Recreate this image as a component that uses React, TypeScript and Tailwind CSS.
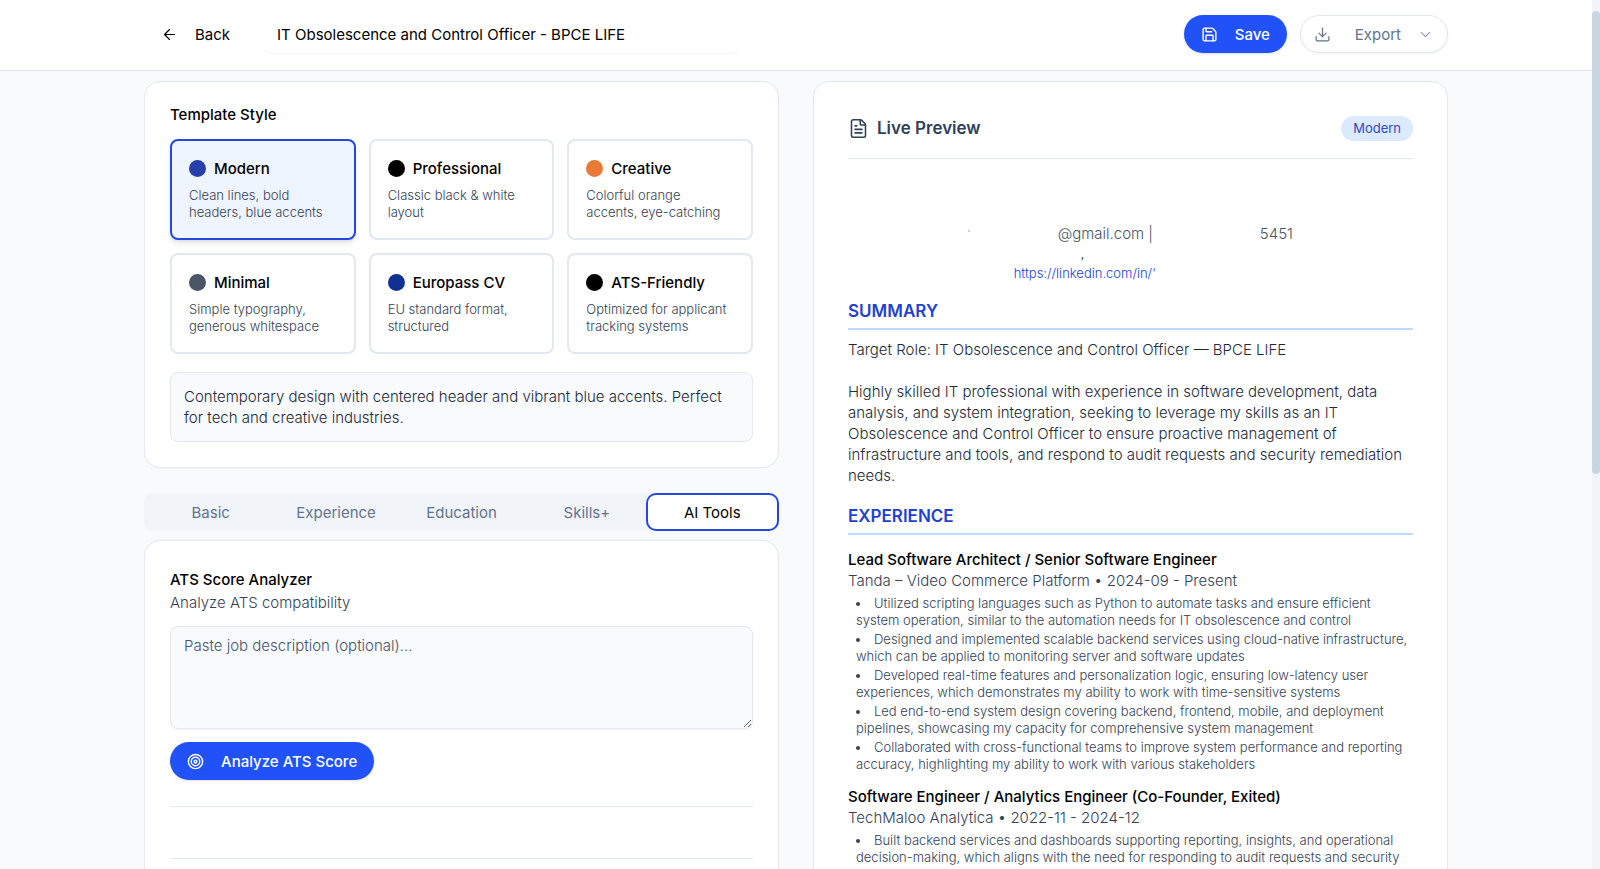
import React, { useState } from 'react';
import { ArrowLeft, ChevronDown, Download, FileText, Save, Target } from 'lucide-react';

interface Template {
  id: string;
  name: string;
  description: string;
  dot: string;
}

interface Job {
  title: string;
  company: string;
  bullets: string[];
}

const templates: Template[] = [
  { id: 'modern', name: 'Modern', description: 'Clean lines, bold headers, blue accents', dot: 'bg-[#2540ab]' },
  { id: 'professional', name: 'Professional', description: 'Classic black & white layout', dot: 'bg-black' },
  { id: 'creative', name: 'Creative', description: 'Colorful orange accents, eye-catching', dot: 'bg-[#e87a35]' },
  { id: 'minimal', name: 'Minimal', description: 'Simple typography, generous whitespace', dot: 'bg-gray-600' },
  { id: 'europass', name: 'Europass CV', description: 'EU standard format, structured', dot: 'bg-[#113192]' },
  { id: 'ats', name: 'ATS-Friendly', description: 'Optimized for applicant tracking systems', dot: 'bg-black' },
];

const tabs = ['Basic', 'Experience', 'Education', 'Skills+', 'AI Tools'];

const jobs: Job[] = [
  {
    title: 'Lead Software Architect / Senior Software Engineer',
    company: 'Tanda – Video Commerce Platform • 2024-09 - Present',
    bullets: [
      'Utilized scripting languages such as Python to automate tasks and ensure efficient system operation, similar to the automation needs for IT obsolescence and control',
      'Designed and implemented scalable backend services using cloud-native infrastructure, which can be applied to monitoring server and software updates',
      'Developed real-time features and personalization logic, ensuring low-latency user experiences, which demonstrates my ability to work with time-sensitive systems',
      'Led end-to-end system design covering backend, frontend, mobile, and deployment pipelines, showcasing my capacity for comprehensive system management',
      'Collaborated with cross-functional teams to improve system performance and reporting accuracy, highlighting my ability to work with various stakeholders',
    ],
  },
  {
    title: 'Software Engineer / Analytics Engineer (Co-Founder, Exited)',
    company: 'TechMaloo Analytica • 2022-11 - 2024-12',
    bullets: [
      'Built backend services and dashboards supporting reporting, insights, and operational decision-making, which aligns with the need for responding to audit requests and security',
    ],
  },
];

const Header: React.FC = () => (
  <header className="shrink-0 border-b border-slate-200 bg-white">
    <div className="mx-auto flex h-[70px] max-w-[1304px] items-center justify-between pb-[2px]">
      <div className="flex items-center">
        <button className="flex items-center gap-[17px] px-[17px]">
          <ArrowLeft className="h-[17px] w-[17px]" strokeWidth={1.75} />
          Back
        </button>
        <input
          aria-label="Resume title"
          defaultValue="IT Obsolescence and Control Officer - BPCE LIFE"
          className="ml-4 h-[38px] w-[478px] rounded-lg bg-white px-[14px] shadow-[0_1px_2px_rgba(0,0,0,0.04)] outline-none"
        />
      </div>
      <div className="flex items-center gap-[13px]">
        <button className="flex h-[38px] items-center gap-[17px] rounded-full bg-[#2152f8] px-[17px] font-medium text-white shadow-sm">
          <Save className="h-[17px] w-[17px]" />
          Save
        </button>
        <button className="flex h-[38px] items-center rounded-full border border-slate-200 bg-white px-[13px] text-slate-500 shadow-xs">
          <Download className="mr-[24px] h-[17px] w-[17px]" strokeWidth={1.75} />
          Export
          <ChevronDown className="ml-4 h-[17px] w-[17px] text-slate-400" strokeWidth={1.75} />
        </button>
      </div>
    </div>
  </header>
);

const TemplatePicker: React.FC = () => {
  const [selected, setSelected] = useState('modern');

  return (
    <section className="rounded-2xl border border-slate-200 bg-white p-[25px]">
      <h2 className="mb-[17px] leading-[15px] font-medium">Template Style</h2>
      <div className="grid grid-cols-3 gap-[13px]">
        {templates.map((t) => (
          <button
            key={t.id}
            onClick={() => setSelected(t.id)}
            className={`rounded-lg border-2 p-[17px] text-left ${
              selected === t.id ? 'border-[#2547e0] bg-[#eff5ff] shadow-md' : 'border-slate-200 bg-white'
            }`}
          >
            <div className="mb-2 flex items-center gap-2">
              <span className={`h-[17px] w-[17px] rounded-full ${t.dot}`} />
              <span className="font-medium">{t.name}</span>
            </div>
            <p className="text-[13px] leading-[17px] font-light text-gray-700">{t.description}</p>
          </button>
        ))}
      </div>
      <p className="mt-[18px] rounded-lg border border-slate-200 bg-slate-50 p-[13px] font-light text-gray-800">
        Contemporary design with centered header and vibrant blue accents. Perfect for tech and creative industries.
      </p>
    </section>
  );
};

const AiTools: React.FC = () => (
  <section className="mt-[9px] rounded-2xl border border-slate-200 bg-white p-[25px] pt-[27px]">
    <h2 className="leading-6 font-medium">ATS Score Analyzer</h2>
    <p className="font-light text-gray-700">Analyze ATS compatibility</p>
    <textarea
      aria-label="Job description"
      placeholder="Paste job description (optional)..."
      className="mt-[13px] block h-[103px] w-full rounded-lg border border-slate-200 bg-slate-50 px-[13px] py-2 font-light shadow-xs outline-none placeholder:text-slate-600"
    />
    <button className="mt-[13px] flex h-[38px] items-center gap-[17px] rounded-full bg-[#2152f8] px-[17px] font-medium text-white shadow-sm">
      <Target className="h-[17px] w-[17px]" />
      Analyze ATS Score
    </button>
    <hr className="mt-[26px] border-slate-200" />
    <hr className="mt-[51px] border-slate-200" />
    <div className="h-20" />
  </section>
);

const Editor: React.FC = () => {
  const [active, setActive] = useState('AI Tools');

  return (
    <div>
      <TemplatePicker />
      <div role="tablist" className="mt-[25px] grid h-[38px] grid-cols-5 rounded-lg bg-slate-100 p-1">
        {tabs.map((tab) => (
          <button
            key={tab}
            role="tab"
            aria-selected={active === tab}
            onClick={() => setActive(tab)}
            className={
              active === tab
                ? 'rounded-md bg-white ring-2 ring-[#2547e0] ring-offset-2'
                : 'rounded-md text-slate-500'
            }
          >
            {tab}
          </button>
        ))}
      </div>
      <AiTools />
    </div>
  );
};

const SectionTitle: React.FC<{ children: React.ReactNode }> = ({ children }) => (
  <h3 className="border-b-2 border-blue-200 pb-1 text-[17px] leading-[26px] font-semibold text-[#1f42d0]">{children}</h3>
);

const Preview: React.FC = () => (
  <section className="rounded-2xl border border-slate-200 bg-white px-[34px] py-[33px]">
    <div className="flex items-center justify-between border-b border-slate-200 pb-[17px]">
      <h2 className="flex items-center gap-2 text-[17px] leading-[26px] font-semibold text-slate-700">
        <FileText className="h-[21px] w-[21px]" strokeWidth={1.75} />
        Live Preview
      </h2>
      <span className="rounded-full bg-blue-100 px-3 py-1 text-[13px] leading-[17px] text-[#3548c0]">Modern</span>
    </div>

    <div className="mt-16 font-light text-gray-600">
      <div className="flex justify-center">
        <span className="mr-[88px] text-[8px] leading-[21px]">‵</span>
        <span>@gmail.com</span>
        <span className="mr-[107px] ml-1">|</span>
        <span>5451</span>
      </div>
      <div className="h-[21px] pr-[96px] text-center text-xs leading-[35px] font-medium">′</div>
      <div className="pr-[92px] text-center text-[13px] leading-[17px]">
        <a href="https://linkedin.com/in/" className="text-[#2340e0]">
          https://linkedin.com/in/‘
        </a>
      </div>
    </div>

    <div className="mt-4">
      <SectionTitle>SUMMARY</SectionTitle>
      <p className="mt-[9px] mb-[17px] whitespace-pre-line font-light text-gray-800">
        {'Target Role: IT Obsolescence and Control Officer — BPCE LIFE\n\nHighly skilled IT professional with experience in software development, data analysis, and system integration, seeking to leverage my skills as an IT Obsolescence and Control Officer to ensure proactive management of infrastructure and tools, and respond to audit requests and security remediation needs.'}
      </p>
    </div>

    <div>
      <SectionTitle>EXPERIENCE</SectionTitle>
      <div className="mt-[14px] space-y-[13px]">
        {jobs.map((job) => (
          <article key={job.title}>
            <h4 className="font-medium">{job.title}</h4>
            <p className="font-light text-gray-700">{job.company}</p>
            <ul className="mt-1 ml-2 list-inside list-disc space-y-[2px] text-[13px] leading-[17px] font-light text-gray-700">
              {job.bullets.map((bullet) => (
                <li key={bullet}>{bullet}</li>
              ))}
            </ul>
          </article>
        ))}
      </div>
    </div>
  </section>
);

const App: React.FC = () => {
  return (
    <div className="flex h-screen overflow-hidden bg-slate-50 font-['Inter',sans-serif] text-[15px] leading-[21px] text-black">
      <div className="flex min-w-0 flex-1 flex-col">
        <Header />
        <main className="min-h-0 flex-1 overflow-hidden">
          <div className="mx-auto mt-[10px] grid max-w-[1304px] grid-cols-2 items-start gap-[34px]">
            <Editor />
            <Preview />
          </div>
        </main>
      </div>
      <div className="w-2 shrink-0 bg-slate-100 pt-[11px]">
        <div className="h-[54%] rounded-full bg-slate-300" />
      </div>
    </div>
  );
};

export default App;
